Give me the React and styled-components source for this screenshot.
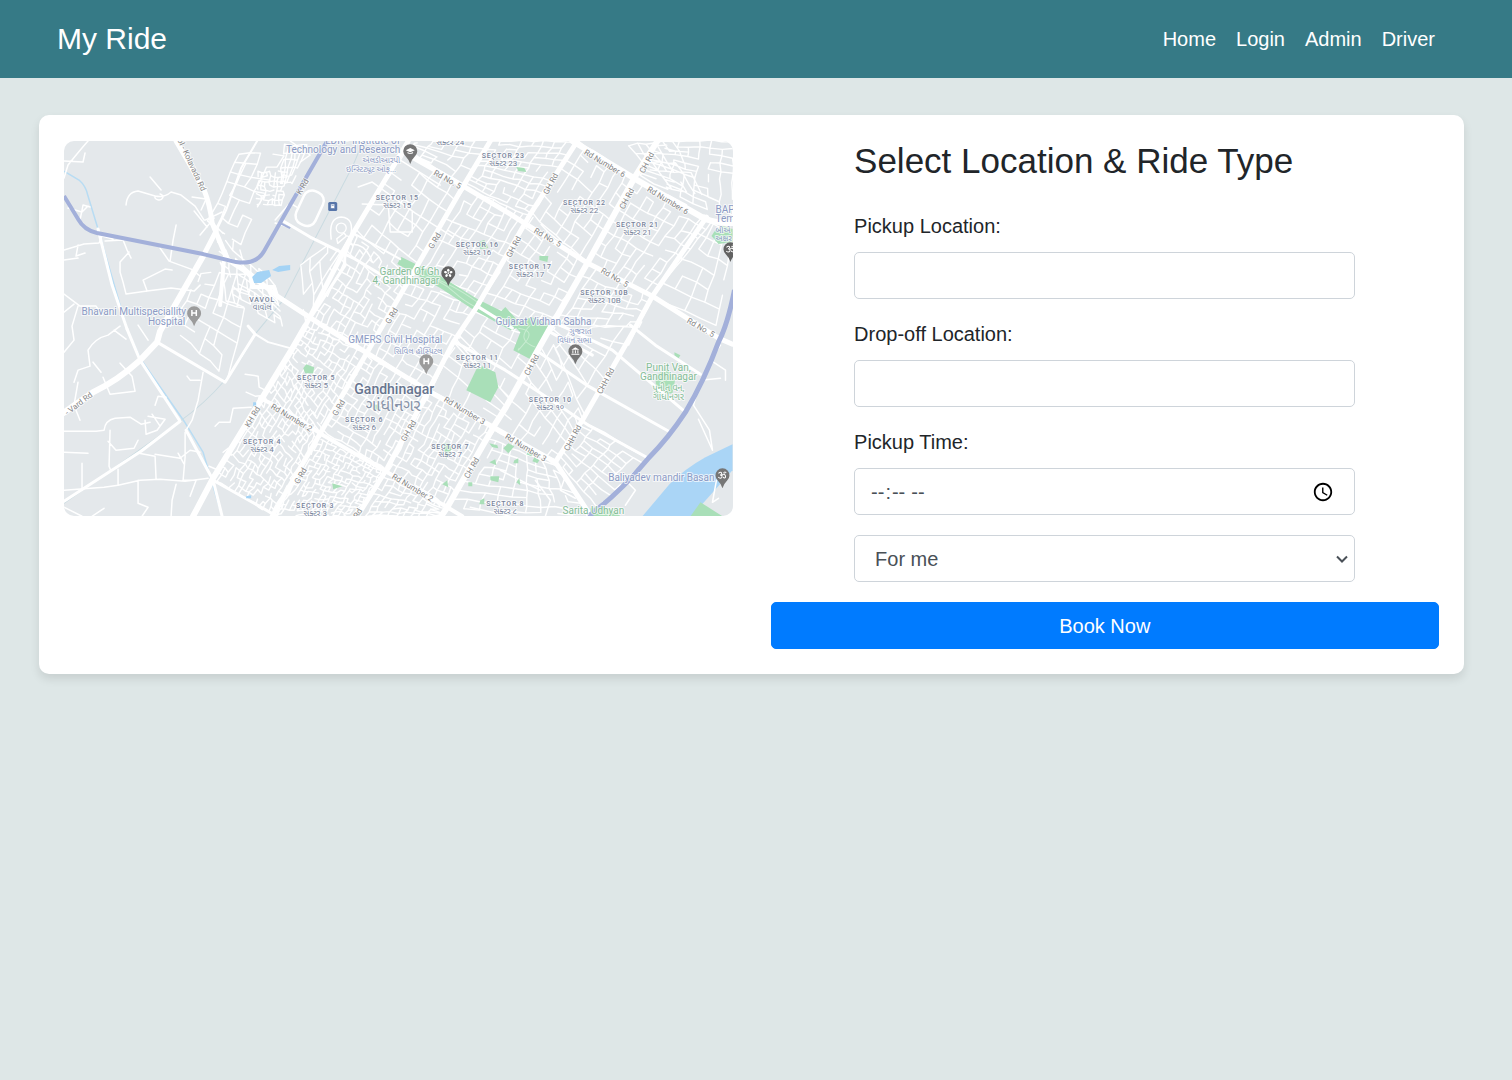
import React from "react";
import styled, { createGlobalStyle } from "styled-components";

const GlobalStyle = createGlobalStyle`
  *, *::before, *::after { box-sizing: border-box; }
  body {
    margin: 0;
    background: #dee7e7;
    color: #212529;
    font-family: "Liberation Sans", Arial, sans-serif;
    font-size: 20px;
    line-height: 30px;
  }
`;

const Header = styled.header`
  display: flex;
  align-items: center;
  justify-content: space-between;
  padding: 16px 77px 16px 57px;
  background: #367a86;
`;

const Brand = styled.a`
  color: #fff;
  font-size: 30px;
  line-height: 46px;
  text-decoration: none;
`;

const Nav = styled.nav`
  display: flex;
  gap: 20px;
`;

const NavLink = styled.a`
  color: #fff;
  text-decoration: none;
`;

const Page = styled.main`
  padding: 37px 48px 37px 39px;
`;

const Card = styled.section`
  display: grid;
  grid-template-columns: minmax(0, 1fr) minmax(0, 1fr);
  gap: 38px;
  align-items: start;
  padding: 26px 25px 25px;
  background: #fff;
  border-radius: 10px;
  box-shadow: 0 5px 10px rgba(0, 0, 0, 0.1);
`;

const MapFrame = styled.svg`
  display: block;
  width: 100%;
  height: auto;
  border-radius: 10px;
  background: #e4e8eb;
  font-family: Roboto, "Noto Sans Gujarati", "Noto Sans", sans-serif;
`;

const Form = styled.form`
  display: flex;
  flex-direction: column;
`;

const Fields = styled.div`
  display: flex;
  flex-direction: column;
  gap: 20px;
  width: 75%;
  margin: 0 auto 20px;
`;

const Title = styled.h2`
  margin: 0 0 10px;
  font-size: 35px;
  font-weight: 400;
  line-height: 40px;
`;

const Field = styled.div`
  display: flex;
  flex-direction: column;
  gap: 10px;
`;

const Label = styled.label`
  line-height: 31px;
`;

const Input = styled.input`
  width: 100%;
  height: 47px;
  padding: 0 15px;
  border: 1px solid #ced4da;
  border-radius: 5px;
  background: #fff;
  color: #495057;
  font: inherit;

  &::-webkit-calendar-picker-indicator {
    width: 22px;
    height: 22px;
    padding: 0;
    margin-right: 5px;
  }
`;

const SelectWrap = styled.div`
  position: relative;
`;

const Select = styled.select`
  display: block;
  width: 100%;
  height: 47px;
  padding: 0 20px;
  border: 1px solid #ced4da;
  border-radius: 5px;
  background: #fff;
  color: #495057;
  font: inherit;
  appearance: none;
`;

const Chevron = styled.svg`
  position: absolute;
  top: 20px;
  right: 7px;
  width: 12px;
  height: 8px;
  pointer-events: none;
`;

const BookButton = styled.button`
  height: 47px;
  border: 1px solid #007bff;
  border-radius: 5px;
  background: #007bff;
  color: #fff;
  font: inherit;
  cursor: pointer;
`;

/* Street blocks: four corners, then columns and rows of lanes. */
const blocks = [
  [[305, 326], [353, 233], [407, 283], [367, 353], 11, 11],
  [[355, 230], [407, 150], [463, 186], [410, 278], 7, 6],
  [[410, 150], [418, 141], [490, 141], [463, 184], 6, 5],
  [[465, 184], [490, 141], [577, 141], [532, 214], 11, 8],
  [[410, 278], [463, 188], [530, 216], [477, 306], 9, 9],
  [[532, 214], [577, 141], [635, 178], [587, 263], 8, 7],
  [[480, 303], [532, 218], [587, 263], [548, 325], 8, 7],
  [[587, 263], [635, 178], [712, 219], [652, 296], 8, 9],
  [[640, 176], [657, 141], [732, 141], [732, 223], 10, 7],
  [[548, 325], [587, 266], [652, 297], [638, 327], 6, 8],
  [[652, 296], [706, 219], [732, 235], [716, 325], 6, 4],
  [[282, 367], [305, 326], [367, 354], [323, 428], 10, 13],
  [[213, 478], [283, 365], [323, 430], [276, 516], 18, 15],
  [[323, 430], [367, 356], [430, 392], [387, 470], 12, 11],
  [[276, 514], [323, 434], [387, 470], [357, 516], 16, 17],
  [[357, 516], [387, 470], [447, 507], [441, 516], 8, 11],
  [[389, 470], [430, 392], [493, 427], [448, 505], 11, 12],
  [[368, 352], [407, 284], [477, 306], [430, 390], 8, 9],
  [[455, 340], [477, 307], [548, 331], [510, 400], 6, 5],
  [[432, 390], [453, 342], [510, 398], [493, 425], 4, 4],
  [[447, 507], [493, 429], [555, 462], [588, 516], 9, 9],
  [[495, 427], [548, 331], [582, 420], [555, 460], 7, 7],
  [[548, 331], [560, 325], [638, 327], [584, 415], 5, 5],
  [[555, 460], [582, 421], [648, 458], [598, 507], 9, 6],
  [[171, 326], [202, 273], [253, 274], [228, 379], 6, 6],
  [[227, 300], [215, 224], [275, 285], [282, 325], 8, 7],
  [[207, 222], [240, 153], [283, 155], [240, 245], 7, 4],
  [[300, 264], [345, 233], [350, 240], [305, 325], 5, 4],
  [[258, 172], [287, 172], [282, 205], [257, 204], 7, 7],
  [[284, 145], [307, 145], [292, 183], [280, 183], 5, 5],
  [[628, 145], [672, 141], [702, 195], [665, 188], 5, 5],
];

const noise = (n) => {
  const s = Math.sin(n * 127.1 + 11.7) * 43758.5453;
  return s - Math.floor(s);
};

function lanes([a, b, c, d, cols, rows], seed) {
  const at = (i, j) => {
    const u = i / cols;
    const v = j / rows;
    const k = seed * 997 + i * 31 + j;
    const jx = (noise(k) - 0.5) * 2.4;
    const jy = (noise(k + 400) - 0.5) * 2.4;
    const x = a[0] * (1 - u) * (1 - v) + b[0] * u * (1 - v) + c[0] * u * v + d[0] * (1 - u) * v;
    const y = a[1] * (1 - u) * (1 - v) + b[1] * u * (1 - v) + c[1] * u * v + d[1] * (1 - u) * v;
    return `${(x + jx).toFixed(1)} ${(y + jy).toFixed(1)}`;
  };
  let path = "";
  for (let i = 0; i <= cols; i += 1) {
    for (let j = 0; j <= rows; j += 1) {
      const k = seed * 613 + i * 41 + j * 7;
      if (i < cols && noise(k) > 0.3) path += `M${at(i, j)}L${at(i + 1, j)}`;
      if (j < rows && noise(k + 3) > 0.3) path += `M${at(i, j)}L${at(i, j + 1)}`;
    }
  }
  return path;
}

const majorRoads = [
  ["M305 326L290 352L213 478L193 516", 6],
  ["M305 326L353 233L395 163L408 141", 5],
  ["M490 141L463 186L407 283L323 428L280 502L272 516", 5],
  ["M577 141L530 214L477 306L453 342L430 387L387 468L357 516", 5],
  ["M657 141L635 176L587 263L548 331L505 408L493 427L447 507L441 516", 6],
  ["M706 217L652 296L633 331L582 420L555 462", 5],
  ["M410 156L463 186L510 214L587 263L652 296L718 338L732 344", 5],
  ["M572 141L635 179L705 219Q717 223 732 223", 6],
  ["M176 141L190 165L204 190Q210 205 212 223L227 259L250 274L277 296L323 326L367 353L430 392L493 427L555 462L588 512", 5],
  ["M260 398L283 409L323 435L387 472L447 507L462 516", 4],
  ["M213 480L277 516", 3],
  ["M203 256L160 331L157 342L140 360Q118 380 93 392L63 413", 6],
  ["M203 256L216 231", 5],
  ["M216 231L226 210L241 168L257 141", 2],
  ["M283 221L310 237L353 258L390 280", 3],
  ["M353 233L400 259", 2],
  ["M455 342L505 370L548 398L588 425L648 458", 3],
  ["M477 306L512 328M540 353L588 386L670 432", 3],
  ["M548 331L592 355M560 325L612 350L685 412", 3],
  ["M630 325L655 345L700 374", 3],
  ["M224 258L220 305M250 274L252 287L274 287L277 296", 4],
  ["M157 342L225 382L255 334L248 326", 3],
  ["M64 501L141 451L180 421L140 360", 3],
  ["M255 334L268 342L290 348", 2],
  ["M127 329L140 360M186 430L213 480L222 516", 3],
  ["M98 229L112 285L127 329", 3],
  ["M353 233L348 246Q343 258 345 265L305 326", 3],
];

const countryLanes =
  "M64 178L68 165Q80 150 88 141M64 161L83 162L85 153M126 205Q127 192 138 191L155 196Q164 198 171 192L181 195L195 206L204 220M150 177L161 190M155 196a4 3 0 1 0 5 -2" +
  "M64 250L84 244L99 243L102 236L113 239M64 260L78 258M78 245L76 256L85 253M105 241L123 240L127 250L131 258M129 252L120 262L120 272L123 282L126 294L147 291L171 288L194 291L200 285M147 291L143 280L151 276L165 269L172 270M160 248L169 261L191 269L200 276M170 261L173 240L176 225M64 294L80 306L96 306L102 315M64 312L74 304M78 306L72 326L74 340L64 352" +
  "M68 208L82 212L88 206M80 220L83 205L90 207M192 197L206 199L201 210M285 226L275 223M288 205L275 220M194 211L207 227M205 220L222 212M200 235L214 218" +
  "M64 431L96 431L104 430Q105 420 115 418L130 417L141 424L150 422M108 441L116 450L134 448L138 440M110 430L109 466L111 471M64 452L88 453M82 463L82 490M64 490L104 487L118 485L140 480L160 479L185 481L208 478M118 469L118 485M139 453L155 456L156 479M155 454L180 458L190 450L200 452M178 453L184 464M185 432L185 457L183 480L196 480L190 496M176 484L172 500L171 516M138 480L138 503L148 507L142 516M92 516L104 508M64 507L82 516" +
  "M203 372L198 400L192 420L186 430M187 376L190 380L200 380M245 374L258 376L259 387L267 391M215 426L219 422L230 422L233 408L251 407M246 392L255 396L266 395M223 452L228 448L231 455M209 466L216 469" +
  "M103 377L110 394L135 391L132 376L120 363M93 362L101 372M74 382L78 370L90 366L88 350Q95 338 108 335L120 326M114 330L126 339M155 405L158 396L166 397M138 325L148 340M148 416L165 419L157 430L146 434L145 420M152 414L160 426M78 382L74 405L80 420" +
  "M698 419L712 450L709 430L693 405L700 380L720 378M720 345L710 360L725 370L725 380M625 505L635 490L625 480M625 446L648 458M615 440L633 450M718 498L712 502L716 480M470 507L510 516M500 470L540 490M565 476L560 490L575 498M535 480L550 500L545 516" +
  "M290 141L310 155L300 162M290 203L310 215M358 187L372 182L415 213L453 237M400 160L440 185M412 212L412 232L390 232L388 205L362 204M372 262Q365 240 345 245";

const parks = [
  "M401 257L397 264L440 288L472 309L510 330L516 328L520 332L513 350L530 359L549 324L531 317L519 322L505 307L501 311L477 299L440 276Z",
  "M476 369L482 366L495 372L498 387L490 402L466 390Z",
  "M303 368L306 364L314 367L313 373L305 373Z",
  "M655 376L665 368L675 378L672 393L656 395Z",
  "M711 236L715 230L722 226L732 229L732 242L718 244Z",
  "M690 516L700 502L722 516Z",
  "M478 242L484 240L488 248L480 249Z",
  "M516 167L524 168L526 172L518 171Z",
  "M539 256L548 256L547 262L539 260Z",
  "M503 448L508 443L514 446L508 453Z",
  "M489 443L497 445L498 448L492 447Z",
  "M443 443L449 443L451 449L446 459L444 450Z",
  "M442 484L447 480L448 487Z",
  "M332 483L342 486L333 489Z",
  "M489 462L495 459L496 465Z",
  "M490 476L499 476L498 482L490 480Z",
  "M480 500L484 498L484 504L479 504Z",
  "M516 482L519 478L520 485Z",
  "M534 457L539 460L537 463L532 461Z",
  "M528 451L533 453L531 456L526 454Z",
  "M514 460L518 458L518 463L513 463Z",
  "M374 405L378 404L379 409L375 410Z",
  "M590 508Q605 505 616 512L620 516L590 516Z",
  "M674 352L680 355L678 358L674 355Z",
  "M468 482L472 482L472 486L468 486Z",
];

const places = [
  [503, 158, "SECTOR 23", "સેક્ટર 23"],
  [397, 200, "SECTOR 15", "સેક્ટર 15"],
  [584, 205, "SECTOR 22", "સેક્ટર 22"],
  [637, 227, "SECTOR 21", "સેક્ટર 21"],
  [477, 247, "SECTOR 16", "સેક્ટર 16"],
  [530, 269, "SECTOR 17", "સેક્ટર 17"],
  [604, 295, "SECTOR 10B", "સેક્ટર 10B"],
  [262, 302, "VAVOL", "વાવોલ"],
  [477, 360, "SECTOR 11", "સેક્ટર 11"],
  [316, 380, "SECTOR 5", "સેક્ટર 5"],
  [550, 402, "SECTOR 10", "સેક્ટર ૧૦"],
  [364, 422, "SECTOR 6", "સેક્ટર 6"],
  [262, 444, "SECTOR 4", "સેક્ટર 4"],
  [450, 449, "SECTOR 7", "સેક્ટર 7"],
  [315, 508, "SECTOR 3", "સેક્ટર 3"],
  [505, 506, "SECTOR 8", "સેક્ટર ૮"],
];

const roadNames = [
  [191, 165, 65, "ol - Kolavada Rd"],
  [303, 187, -60, "K Rd"],
  [447, 180, 29, "Rd No. 5"],
  [435, 241, -60, "G Rd"],
  [392, 316, -60, "G Rd"],
  [551, 184, -62, "GH Rd"],
  [514, 247, -62, "GH Rd"],
  [604, 164, 31, "Rd Number 6"],
  [647, 163, -62, "CH Rd"],
  [627, 199, -62, "CH Rd"],
  [667, 201, 31, "Rd Number 6"],
  [547, 238, 30, "Rd No. 5"],
  [614, 278, 30, "Rd No. 5"],
  [700, 328, 30, "Rd No. 5"],
  [532, 365, -62, "CH Rd"],
  [606, 381, -62, "CHH Rd"],
  [573, 438, -62, "CHH Rd"],
  [525, 448, 31, "Rd Number 3"],
  [464, 411, 31, "Rd Number 3"],
  [291, 418, 31, "Rd Number 2"],
  [412, 488, 31, "Rd Number 2"],
  [339, 408, -60, "G Rd"],
  [301, 476, -60, "G Rd"],
  [409, 431, -60, "GH Rd"],
  [472, 468, -60, "CH Rd"],
  [253, 417, -60, "KH Rd"],
  [79, 404, -37, "- Vard Rd"],
  [355, 519, -60, "GH Rd"],
];

const pois = [
  [400, 144, "end", "#8c9bc5", 10, "LDRP Institute of"],
  [400, 153, "end", "#8c9bc5", 10, "Technology and Research"],
  [400, 163, "end", "#8c9bc5", 8, "એલડીઆરપી"],
  [396, 172, "end", "#8c9bc5", 8, "ઇન્સ્ટિટ્યૂટ ઓફ..."],
  [450, 145, "middle", "#77839b", 8, "સેક્ટર 24"],
  [186, 315, "end", "#8c9bc5", 10, "Bhavani Multispeciallity"],
  [185, 325, "end", "#8c9bc5", 10, "Hospital"],
  [439, 275, "end", "#85bd97", 10, "Garden Of Gh"],
  [439, 284, "end", "#85bd97", 10, "4, Gandhinagar"],
  [591, 325, "end", "#8c9bc5", 10, "Gujarat Vidhan Sabha"],
  [591, 334, "end", "#8c9bc5", 8, "ગુજરાત"],
  [591, 343, "end", "#8c9bc5", 8, "વિધાન સભા"],
  [442, 343, "end", "#8c9bc5", 10, "GMERS Civil Hospital"],
  [442, 354, "end", "#8c9bc5", 8, "સિવિલ હોસ્પિટલ"],
  [668, 371, "middle", "#85bd97", 10, "Punit Van,"],
  [668, 380, "middle", "#85bd97", 10, "Gandhinagar"],
  [668, 391, "middle", "#85bd97", 9, "પુનીત વન,"],
  [668, 400, "middle", "#85bd97", 9, "ગાંધીનગર"],
  [714, 481, "end", "#8c9bc5", 10, "Baliyadev mandir Basan"],
  [593, 514, "middle", "#85bd97", 10, "Sarita Udhyan"],
  [715, 213, "start", "#8c9bc5", 10, "BAPS"],
  [715, 222, "start", "#8c9bc5", 10, "Temple"],
  [715, 233, "start", "#8c9bc5", 8, "બીએ"],
  [715, 241, "start", "#8c9bc5", 8, "અક્ષર"],
];

const glyphs = {
  school: <path d="M-4.5-.8L0-3L4.5-.8L0 1.3ZM-2.8.9V2.2Q0 3.8 2.8 2.2V.9L0 2.2Z" fill="#fff" />,
  hospital: <path d="M-2.2-3V3M2.2-3V3M-2.2 0H2.2" stroke="#fff" strokeWidth="1.5" />,
  flower: (
    <g fill="#fff">
      {[0, 72, 144, 216, 288].map((turn) => (
        <ellipse key={turn} cy="-2.9" rx="1.2" ry="1.5" transform={`rotate(${turn})`} />
      ))}
      <circle r="0.9" />
    </g>
  ),
  museum: <path d="M-4-1.5L0-4L4-1.5ZM-3-.8H-2V2H-3ZM-.5-.8H.5V2H-.5ZM2-.8H3V2H2ZM-4 2.5H4V3.5H-4Z" fill="#fff" />,
  om: (
    <path
      d="M-4-1.8Q-1.5-4-.8-1.8Q-.8-.4-2.4-.3Q0 0-.6 2Q-2 4-4.2 2M-.6.4Q1-1.8 2.4-.4Q4 2 2 2.8Q.6 2.6 1 1.6M1-2.8Q2.4-1.8 3.8-3M2.4-4.2v.4"
      fill="none"
      stroke="#fff"
      strokeWidth="1"
    />
  ),
};

const pins = [
  [410, 151, "#767676", "school"],
  [194, 313, "#9b9b9b", "hospital"],
  [448, 273, "#626262", "flower"],
  [426, 361, "#9b9b9b", "hospital"],
  [575, 351, "#767676", "museum"],
  [722, 475, "#767676", "om"],
  [730, 249, "#626262", "om"],
];

function CityMap() {
  return (
    <MapFrame viewBox="64 141 668 375" role="img" aria-label="Map of Gandhinagar">
      <path d="M64 171L79 180Q86 186 88 196L98 229L127 329L140 358L184 421L203 452L222 516" fill="none" stroke="#b8dcf3" strokeWidth="1.5" />
      <path d="M363 141L353 165L283 300L255 334Q230 385 180 421L64 503" fill="none" stroke="#cadbe1" strokeWidth="1" />
      <path d="M732 444L705 457Q685 468 669 484L642 516H691L732 470Z" fill="#aad5f6" />
      <g fill="none" stroke="#fff" strokeLinejoin="round" strokeLinecap="round">
        <path d={blocks.map(lanes).join("")} strokeWidth="1.4" />
        <path d={countryLanes} strokeWidth="1.5" />
        <rect x="299" y="190" width="21" height="36" rx="9" transform="rotate(25 309 208)" fill="#e4e8eb" strokeWidth="2.5" />
        <circle cx="341" cy="228" r="5" strokeWidth="1.3" />
        <path d="M331 239Q328 218 341 217Q355 218 350 237" strokeWidth="1.5" />
      </g>
      {parks.map((d) => <path key={d} d={d} fill="#a9dfb8" />)}
      <path d="M416 273Q440 279 455 293T503 319M430 277Q450 283 477 302M518 328Q535 330 525 342T519 348M530 325Q515 340 535 347" fill="none" stroke="#c8ecd1" strokeWidth="1" />
      <g fill="none" stroke="#fff" strokeLinejoin="round" strokeLinecap="round">
        {majorRoads.map(([d, width]) => <path key={d} d={d} strokeWidth={width} />)}
      </g>
      <path d="M252 277L257 272L269 270L271 276L261 283L254 283ZM272 270L279 266L290 265L290 270L278 272ZM253 402h3v4h-3ZM246 496l5-1v3h-5Z" fill="#a4d3f5" />
      <g fill="none" stroke="#a3b0da" strokeLinejoin="round">
        <path d="M64 196L78 219Q84 230 97 233L203 254L236 262Q256 265 264 251L290 205L327 141" strokeWidth="4" />
        <path d="M734 290Q727 325 718 342Q704 380 685 412Q668 438 648 458Q620 492 588 516" strokeWidth="5" />
        <path d="M280 223L290 228" strokeWidth="2" />
      </g>
      <g textAnchor="middle" stroke="#fff" strokeOpacity="0.7" strokeWidth="2" paintOrder="stroke" strokeLinejoin="round">
        {roadNames.map(([x, y, turn, name]) => (
          <text key={`${x}-${y}`} x={x} y={y} dy="2" fontSize="8" fill="#868686" transform={`rotate(${turn} ${x} ${y})`}>
            {name}
          </text>
        ))}
        {places.map(([x, y, name, local]) => (
          <g key={name} fill="#77839b" fontSize="7">
            <text x={x} y={y} fontWeight="500" letterSpacing="0.8">{name}</text>
            <text x={x} y={y + 8} fontSize="8">{local}</text>
          </g>
        ))}
        {pois.map(([x, y, anchor, color, size, name]) => (
          <text key={`${x}-${y}`} x={x} y={y} textAnchor={anchor} fontSize={size} fill={color}>
            {name}
          </text>
        ))}
        <text x="394" y="394" fontSize="14" fontWeight="500" fill="#67758f">Gandhinagar</text>
        <text x="393" y="411" fontSize="16" fill="#8793a8">ગાંધીનગર</text>
      </g>
      <g>
        <rect x="328" y="202" width="9" height="9" rx="1.5" fill="#5876aa" />
        <path d="M330.5 204H334.500V208.500H330.500ZM331.500 205.500H333.500" fill="#fff" stroke="#5876aa" strokeWidth="0.600" />
      </g>
      {pins.map(([x, y, color, glyph]) => (
        <g key={`${x}-${y}`} transform={`translate(${x} ${y})`}>
          <path d="M0 13Q-1 9-4.500 5.500A7 7 0 1 1 4.500 5.500Q1 9 0 13Z" fill={color} />
          {glyphs[glyph]}
        </g>
      ))}
    </MapFrame>
  );
}

const links = ["Home", "Login", "Admin", "Driver"];

export default function App() {
  return (
    <>
      <GlobalStyle />
      <Header>
        <Brand href="#home">My Ride</Brand>
        <Nav>
          {links.map((name) => (
            <NavLink key={name} href={`#${name.toLowerCase()}`}>{name}</NavLink>
          ))}
        </Nav>
      </Header>
      <Page>
        <Card>
          <CityMap />
          <Form onSubmit={(event) => event.preventDefault()}>
            <Fields>
              <Title>Select Location &amp; Ride Type</Title>
              <Field>
                <Label htmlFor="pickup">Pickup Location:</Label>
                <Input id="pickup" type="text" />
              </Field>
              <Field>
                <Label htmlFor="dropoff">Drop-off Location:</Label>
                <Input id="dropoff" type="text" />
              </Field>
              <Field>
                <Label htmlFor="time">Pickup Time:</Label>
                <Input id="time" type="time" />
              </Field>
              <SelectWrap>
                <Select aria-label="Rider" defaultValue="me">
                  <option value="me">For me</option>
                  <option value="other">For someone else</option>
                </Select>
                <Chevron viewBox="0 0 12 8" aria-hidden="true">
                  <path d="M1 1.500L6 6.500L11 1.500" fill="none" stroke="#495057" strokeWidth="2" />
                </Chevron>
              </SelectWrap>
            </Fields>
            <BookButton type="submit">Book Now</BookButton>
          </Form>
        </Card>
      </Page>
    </>
  );
}
